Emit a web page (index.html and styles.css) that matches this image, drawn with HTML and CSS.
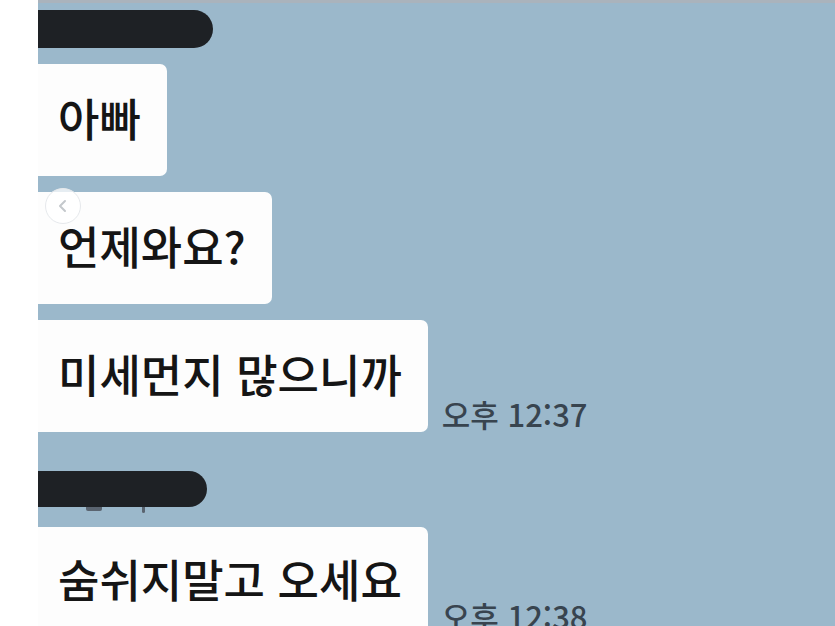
FILE: index.html
```html
<!DOCTYPE html>
<html lang="ko">
<head>
<meta charset="utf-8">
<title>Chat</title>
<link rel="stylesheet" href="styles.css">
</head>
<body>
<div class="page">
  <div class="gutter"></div>
  <div class="chat">
    <div class="topline"></div>
    <div class="group first">
      <div class="name-blob"></div>
      <div class="row"><div class="bubble b1">아빠</div></div>
      <div class="row">
        <div class="bubble b2">언제와요?
          <span class="back-btn"><svg width="12" height="14" viewBox="0 0 12 14"><path d="M8 2 L3 7 L8 12" fill="none" stroke="#c4c8cc" stroke-width="2" stroke-linecap="round" stroke-linejoin="round"/></svg></span>
        </div>
      </div>
      <div class="row"><div class="bubble b3">미세먼지 많으니까</div><span class="time">오후 12:37</span></div>
    </div>
    <div class="group second">
      <div class="name-blob blob2"><span class="ink ink1"></span><span class="ink ink2"></span></div>
      <div class="row"><div class="bubble b4">숨쉬지말고 오세요</div><span class="time">오후 12:38</span></div>
    </div>
  </div>
</div>
</body>
</html>
```
FILE: styles.css
```css
* { box-sizing: border-box; }
html, body { margin: 0; padding: 0; }
body {
  width: 835px;
  height: 626px;
  overflow: hidden;
  background: #ffffff;
  font-family: "Noto Sans CJK KR", "Noto Sans", sans-serif;
}
.page {
  display: flex;
  height: 626px;
}
.gutter {
  width: 38px;
  flex: none;
  background: #ffffff;
}
.chat {
  flex: 1;
  background: #9bb8cb;
  display: flex;
  flex-direction: column;
  overflow: hidden;
}
.topline {
  height: 3px;
  background: #aab3bc;
  flex: none;
}
.group {
  display: flex;
  flex-direction: column;
  gap: 16px;
  flex: none;
}
.first { padding-top: 7px; }
.second { padding-top: 39px; gap: 20px; }
.name-blob {
  position: relative;
  width: 175px;
  height: 38px;
  background: #1e2125;
  border-radius: 0 20px 20px 0;
}
.blob2 { width: 169px; height: 36px; }
.ink {
  position: absolute;
  top: 36px;
  height: 4px;
  background: #5a6470;
  border-radius: 0 0 2px 2px;
}
.ink1 { left: 48px; width: 16px; }
.ink2 { left: 104px; width: 3px; height: 6px; }
.row {
  display: flex;
  align-items: flex-end;
}
.bubble {
  position: relative;
  background: #fdfdfd;
  border-radius: 0 7px 7px 0;
  padding: 27px 26px 31px 20px;
  font-size: 45px;
  line-height: 54px;
  color: #151515;
  font-weight: 500;
  white-space: nowrap;
  height: 112px;
}
.b4 { height: 107px; padding-top: 25px; }
.back-btn {
  position: absolute;
  left: 7px;
  top: -4px;
  width: 36px;
  height: 36px;
  border-radius: 50%;
  background: rgba(255,255,255,0.75);
  border: 1px solid #e6e9ec;
  display: flex;
  align-items: center;
  justify-content: center;
}
.time {
  margin-left: 14px;
  font-size: 31px;
  line-height: 36px;
  color: #38444f;
  font-weight: 500;
  white-space: nowrap;
}
```
